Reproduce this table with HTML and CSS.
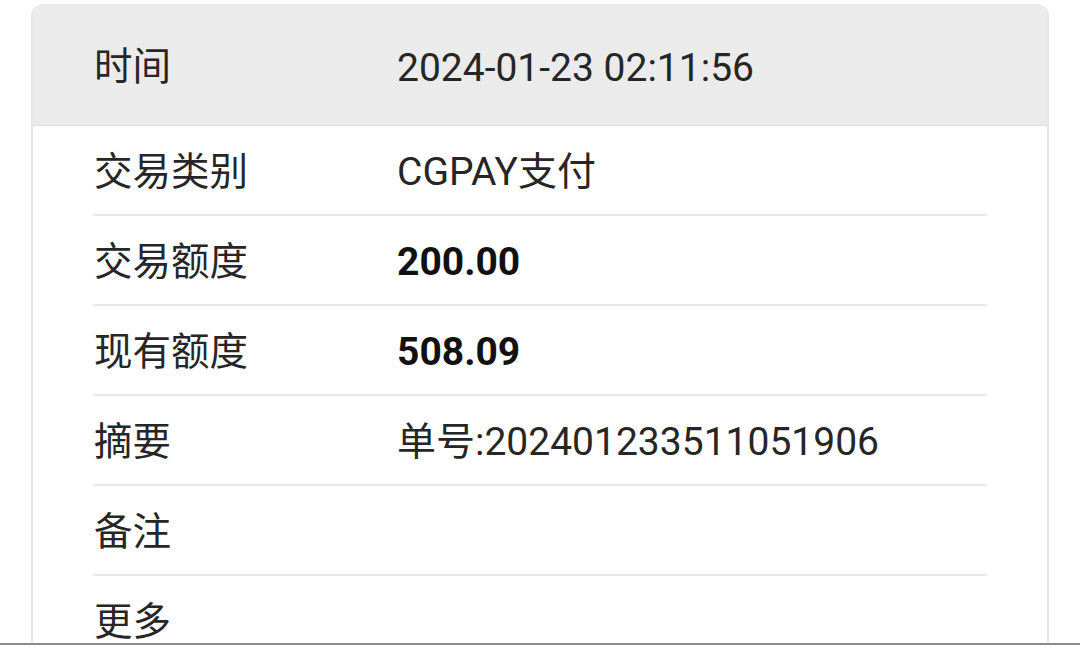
FILE: index.html
```html
<!DOCTYPE html>
<html lang="zh-CN">
<head>
<meta charset="utf-8">
<title>交易详情</title>
<link rel="stylesheet" href="styles.css">
</head>
<body>
<div class="page">
  <div class="card">
    <div class="head">
      <div class="label">时间</div>
      <div class="value">2024-01-23 02:11:56</div>
    </div>
    <div class="rows">
      <div class="row"><div class="label">交易类别</div><div class="value">CGPAY支付</div></div>
      <div class="row"><div class="label">交易额度</div><div class="value strong">200.00</div></div>
      <div class="row"><div class="label">现有额度</div><div class="value strong">508.09</div></div>
      <div class="row"><div class="label">摘要</div><div class="value">单号:20240123351105​1906</div></div>
      <div class="row"><div class="label">备注</div><div class="value"></div></div>
      <div class="row"><div class="label">更多</div><div class="value"></div></div>
    </div>
  </div>
</div>
</body>
</html>
```

FILE: styles.css
```css
* { box-sizing: border-box; }
html, body { margin: 0; padding: 0; background: #ffffff; }
.page {
  width: 1080px;
  height: 645px;
  overflow: hidden;
  border-bottom: 2px solid #8c8c8c;
  padding: 4px 31px 0 31px;
  font-family: Roboto, "Noto Sans CJK SC", sans-serif;
  color: #262626;
}
.card {
  border: 2px solid #e6e6e6;
  border-bottom: none;
  border-top: none;
  border-radius: 12px 12px 0 0;
  background: #fff;
  overflow: hidden;
  height: 700px;
}
.head {
  height: 122px;
  background: #ebebeb;
  display: flex;
  align-items: center;
  padding: 5px 60px 0 60px;
  border-bottom: 1px solid #e2e2e2;
}
.rows { padding: 0 60px; }
.row {
  height: 90px;
  display: flex;
  align-items: center;
  border-bottom: 2px solid #e8e8e8;
  padding-top: 4px;
}
.label {
  width: 304px;
  flex: none;
  font-size: 38.5px;
  line-height: 1.2;
  padding-left: 1px;
}
.value {
  font-size: 39px;
  line-height: 1.2;
}
.head .value { padding-top: 2px; }
.strong { font-weight: 700; color: #111; }
```
